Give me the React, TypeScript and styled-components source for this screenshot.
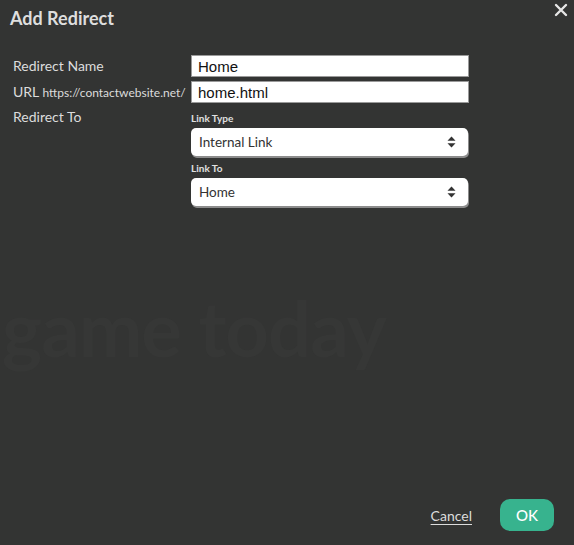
import React from 'react';
import styled, { createGlobalStyle } from 'styled-components';

const GlobalStyle = createGlobalStyle`
    html, body {
        margin: 0;
        padding: 0;
        background: #333433;
    }
    body {
        font-family: Lato, "Noto Sans", sans-serif;
    }
`;

const Dialog = styled('div')`
    position: relative;
    width: 574px;
    height: 545px;
    display: flex;
    flex-direction: column;
    background-color: #333433;
    color: #dcdcdc;
    overflow: hidden;
    box-sizing: border-box;
`;

// faint backdrop text bleeding through the modal
const Ghost = styled('div')`
    position: absolute;
    left: 2px;
    top: 282px;
    font-size: 76px;
    font-weight: 700;
    letter-spacing: -1px;
    color: #363736;
    white-space: nowrap;
    pointer-events: none;
`;

const Header = styled('div')`
    display: flex;
    justify-content: space-between;
    align-items: flex-start;
    padding: 6px 4px 0 10px;
`;

const Title = styled('h1')`
    margin: 0;
    font-size: 18px;
    font-weight: 700;
    color: #dedede;
    line-height: 24px;
`;

const CloseButton = styled('button')`
    background: none;
    border: 0;
    padding: 0;
    margin-top: -3px;
    width: 16px;
    height: 16px;
    display: flex;
    cursor: pointer;
`;

const Form = styled('div')`
    position: relative;
    display: grid;
    grid-template-columns: 178px 278px;
    row-gap: 4px;
    padding: 25px 0 0 13px;
`;

const Label = styled('div')<{ $line?: number }>`
    font-size: 14px;
    line-height: ${(p) => p.$line ?? 22}px;
    color: #dcdcdc;
    white-space: nowrap;
`;

const Hint = styled('span')`
    font-size: 12px;
`;

const TextInput = styled('input')`
    box-sizing: border-box;
    width: 278px;
    height: 22px;
    border: 1px solid #9a9a9a;
    background: #fff;
    padding: 0 6px;
    font-family: "Liberation Sans", Arial, sans-serif;
    font-size: 15px;
    color: #111;
    outline: none;
`;

const Fields = styled('div')`
    display: flex;
    flex-direction: column;
    padding-top: 4px;
`;

const SmallLabel = styled('div')`
    font-size: 10px;
    font-weight: 700;
    line-height: 12px;
    color: #e0e0e0;
    margin-bottom: 4px;
`;

const Select = styled('div')<{ $gap?: number }>`
    box-sizing: border-box;
    width: 277px;
    height: 28px;
    display: flex;
    align-items: center;
    justify-content: space-between;
    background: #fff;
    border-radius: 5px;
    box-shadow: 1px 2px 0 #8c8c8c;
    padding: 0 12px 0 8px;
    margin-bottom: ${(p) => p.$gap ?? 0}px;
    font-size: 13.5px;
    color: #333;
`;

const Footer = styled('div')`
    margin-top: auto;
    display: flex;
    justify-content: flex-end;
    align-items: center;
    gap: 28px;
    padding: 0 20px 14px 0;
`;

const CancelLink = styled('a')`
    font-size: 14px;
    color: #dcdcdc;
    text-decoration: underline;
    text-underline-offset: 3px;
    cursor: pointer;
`;

const OkButton = styled('button')`
    width: 54px;
    height: 32px;
    border: 0;
    border-radius: 10px;
    background: #37b38e;
    color: #fff;
    font-family: Lato, sans-serif;
    font-size: 15px;
    font-weight: 500;
    cursor: pointer;
`;

const Updown = () => (
    <svg width="9" height="12" viewBox="0 0 9 12">
        <path d="M4.5 0.5 L8.5 4.8 H0.5 Z" fill="#333" />
        <path d="M4.5 11.5 L8.5 7.2 H0.5 Z" fill="#333" />
    </svg>
);

const App = () => {
    return (
        <>
            <GlobalStyle />
            <Dialog>
                <Ghost>game today</Ghost>
                <Header>
                    <Title>Add Redirect</Title>
                    <CloseButton aria-label="Close">
                        <svg width="14" height="14" viewBox="0 0 14 14">
                            <path d="M2 2 L12 12 M12 2 L2 12" stroke="#e6e6e6" strokeWidth="2.4" strokeLinecap="round" />
                        </svg>
                    </CloseButton>
                </Header>
                <Form>
                    <Label>Redirect Name</Label>
                    <TextInput defaultValue="Home" />
                    <Label>
                        URL <Hint>https://contactwebsite.net/</Hint>
                    </Label>
                    <TextInput defaultValue="home.html" />
                    <Label $line={18}>Redirect To</Label>
                    <Fields>
                        <SmallLabel>Link Type</SmallLabel>
                        <Select $gap={6}>
                            Internal Link
                            <Updown />
                        </Select>
                        <SmallLabel>Link To</SmallLabel>
                        <Select>
                            Home
                            <Updown />
                        </Select>
                    </Fields>
                </Form>
                <Footer>
                    <CancelLink>Cancel</CancelLink>
                    <OkButton>OK</OkButton>
                </Footer>
            </Dialog>
        </>
    );
};

export default App;
